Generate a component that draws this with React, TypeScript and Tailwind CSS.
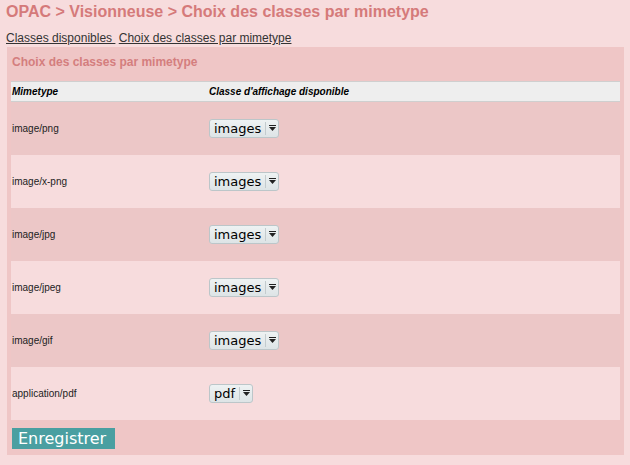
import React from 'react';

const rows: { mime: string; value: string }[] = [
    { mime: 'image/png', value: 'images' },
    { mime: 'image/x-png', value: 'images' },
    { mime: 'image/jpg', value: 'images' },
    { mime: 'image/jpeg', value: 'images' },
    { mime: 'image/gif', value: 'images' },
    { mime: 'application/pdf', value: 'pdf' },
];

const FakeSelect: React.FC<{ value: string }> = ({ value }) => (
    <div className="inline-flex h-[19px] items-stretch rounded-[3px] border border-[#bcc6c9] bg-gradient-to-b from-[#eef2f3] to-[#dde4e6] text-[13px] leading-none text-black font-['DejaVu_Sans',sans-serif]">
        <span className="flex items-center pl-[4px] pr-[4px]">{value}</span>
        <span className="my-[2px] w-px bg-[#c3cbce]" />
        <span className="flex w-[12px] items-center justify-center">
            <svg width="7" height="6" viewBox="0 0 7 6">
                <rect x="0" y="0" width="7" height="1" fill="#222" />
                <path d="M0 2 L7 2 L3.5 6 Z" fill="#222" />
            </svg>
        </span>
    </div>
);

export default function App() {
    return (
        <div className="min-h-[465px] bg-[#f7dcdd] px-[6px] pt-[2px] font-['Liberation_Sans',Arial,sans-serif]">
            <h1 className="text-[16px] font-bold leading-[20px] text-[#d57a7a]">
                OPAC &gt; Visionneuse &gt; Choix des classes par mimetype
            </h1>
            <div className="mt-[9px] text-[12px] leading-[14px] text-[#333]">
                <a href="#" className="underline">Classes disponibles </a>
                {'\u00a0'}
                <a href="#" className="underline">Choix des classes par mimetype</a>
            </div>
            <div className="ml-[1px] mt-[2px] w-[617px] bg-[#efc6c6] px-[4px] pb-[4px] pt-[8px]">
                <h3 className="pl-[1px] text-[12px] font-bold leading-[14px] text-[#d47e7e]">
                    Choix des classes par mimetype
                </h3>
                <table className="mt-[12px] w-[609px] border-collapse text-[10px] text-[#222]">
                    <thead>
                        <tr className="h-[20px] border-y border-[#cfcfcf] bg-[#eeeeee]">
                            <th className="w-[197px] pl-[1px] text-left font-bold italic text-black">Mimetype</th>
                            <th className="pl-[1px] text-left font-bold italic text-black">Classe d'affichage disponible</th>
                        </tr>
                    </thead>
                    <tbody>
                        {rows.map((r, i) => (
                            <tr key={r.mime} className={i % 2 === 0 ? 'h-[53px] bg-[#ecc7c7]' : 'h-[53px] bg-[#f7dcdd]'}>
                                <td className="pl-[1px] align-middle">{r.mime}</td>
                                <td className="pl-[1px] align-middle">
                                    <FakeSelect value={r.value} />
                                </td>
                            </tr>
                        ))}
                    </tbody>
                </table>
                <button className="mt-[8px] ml-[1px] h-[21px] w-[103px] bg-[#4a9fa1] text-left pl-[6px] text-[16px] leading-[21px] text-white font-['DejaVu_Sans',sans-serif]">
                    Enregistrer
                </button>
            </div>
        </div>
    );
}
